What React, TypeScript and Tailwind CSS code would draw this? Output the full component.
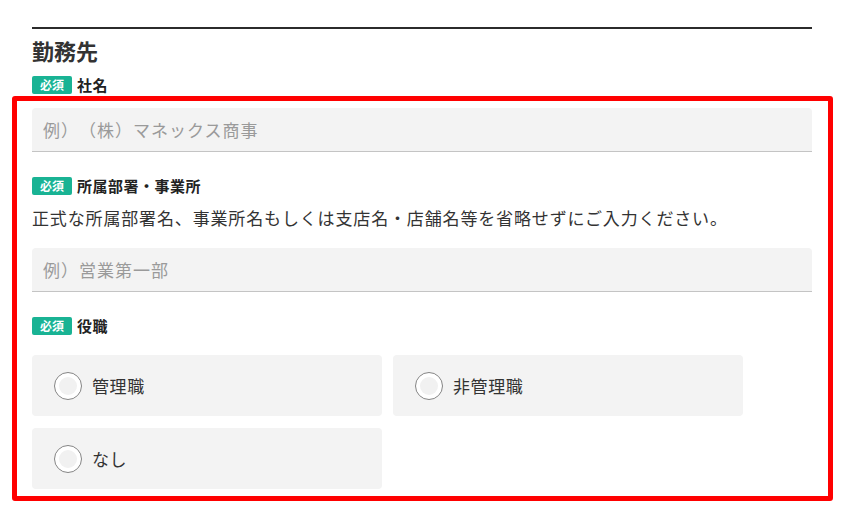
import React from "react";

const font = {
  fontFamily: '"Noto Sans CJK JP", "Noto Sans", sans-serif',
};

function Badge() {
  return (
    <span className="inline-flex h-[18px] w-[40px] items-center justify-center rounded-[2px] bg-[#19b394] text-[12px] font-bold leading-none text-white">
      必須
    </span>
  );
}

function Label({ text }: { text: string }) {
  return (
    <div className="flex items-center gap-[5px]">
      <Badge />
      <span className="text-[15px] font-bold leading-[18px] tracking-[0.5px] text-[#222]">
        {text}
      </span>
    </div>
  );
}

function TextField({ placeholder }: { placeholder: string }) {
  return (
    <input
      type="text"
      placeholder={placeholder}
      className="h-[44px] w-full rounded-t-[4px] border-b border-[#c4c4c4] bg-[#f3f3f3] px-[11px] text-[17px] tracking-[1px] text-[#333] outline-none [font-variant-east-asian:full-width] [text-spacing-trim:space-all] placeholder:text-[#9a9a9a]"
    />
  );
}

function RadioCard({ label }: { label: string }) {
  return (
    <label className="flex h-[61px] w-[350px] cursor-pointer items-center gap-[10px] rounded-[4px] bg-[#f3f3f3] pl-[22px]">
      <span className="flex h-[28px] w-[28px] shrink-0 items-center justify-center rounded-full border-[1.5px] border-[#858585] bg-white">
        <span className="h-[18px] w-[18px] rounded-full bg-[#f1f1f1]" />
      </span>
      <span className="text-[17px] tracking-[0.6px] text-[#333]">{label}</span>
    </label>
  );
}

export default function App() {
  return (
    <div className="relative h-[521px] w-[844px] overflow-hidden bg-white" style={font}>
      <div className="px-[32px] pt-[27px]">
        <div className="h-[2px] w-[780px] bg-[#2b2b2b]" />
        <h2 className="mt-[6px] text-[22px] font-bold leading-[30px] text-[#333]">勤務先</h2>

        <div className="mt-[11px]">
          <Label text="社名" />
        </div>
        <div className="mt-[14px] w-[780px]">
          <TextField placeholder="例）（株）マネックス商事" />
        </div>

        <div className="mt-[25px]">
          <Label text="所属部署・事業所" />
        </div>
        <p className="mt-[10px] text-[17px] leading-[26px] tracking-[0.85px] text-[#333] [text-spacing-trim:space-all]">
          正式な所属部署名、事業所名もしくは支店名・店舗名等を省略せずにご入力ください。
        </p>
        <div className="mt-[17px] w-[780px]">
          <TextField placeholder="例）営業第一部" />
        </div>

        <div className="mt-[25px]">
          <Label text="役職" />
        </div>
        <div className="mt-[20px] grid w-[711px] grid-cols-2 gap-x-[11px] gap-y-[12px]">
          <RadioCard label="管理職" />
          <RadioCard label="非管理職" />
          <RadioCard label="なし" />
        </div>
      </div>

      {/* annotation frame */}
      <div className="pointer-events-none absolute left-[12px] top-[96px] h-[405px] w-[821px] rounded-[3px] border-[5px] border-[#ff0000]" />
    </div>
  );
}
